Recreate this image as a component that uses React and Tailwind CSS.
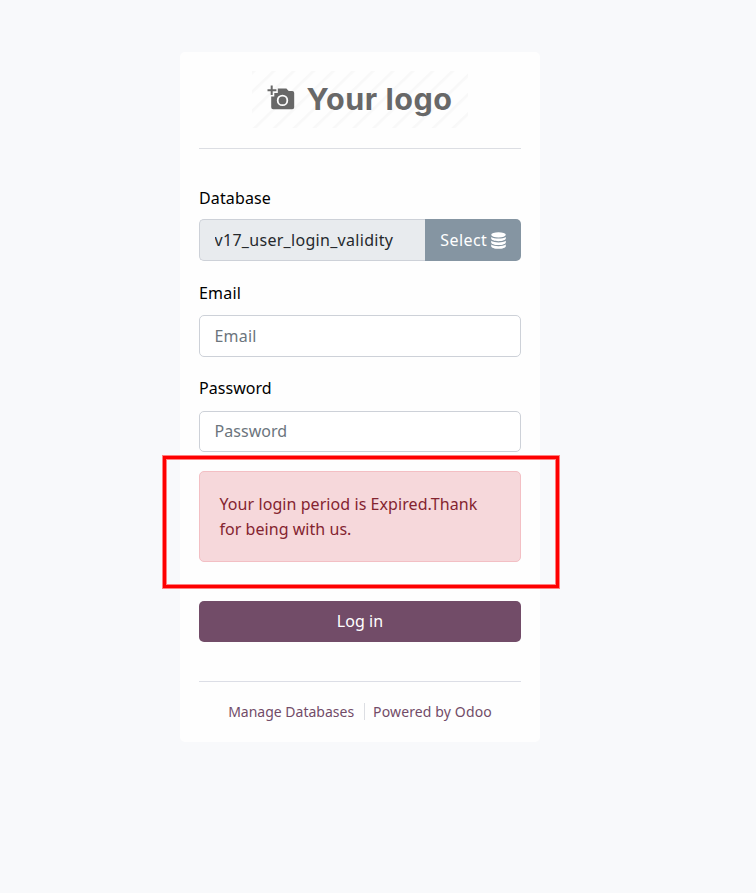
import React from "react";

function Logo() {
  return (
    <svg width="216" height="57" viewBox="0 0 216 57" className="mx-auto block" role="img" aria-label="Your logo">
      <defs>
        <pattern id="stripes" width="13.8" height="13.8" patternUnits="userSpaceOnUse" patternTransform="rotate(46)">
          <rect width="2.600" height="13.8" fill="#f8f8f8" />
        </pattern>
      </defs>
      <rect width="216" height="57" fill="url(#stripes)" />
      <g fill="#686868">
        <path d="M18.700 14.600h2v3.700h3.700v2h-3.700v3.700h-2v-3.700h-3.200v-2h3.200z" />
        <path
          fillRule="evenodd"
          d="M25.800 17.400h8.600l2.300 2.600h3.500a2 2 0 0 1 2 2v14.300a2 2 0 0 1-2 2H21.200a2 2 0 0 1-2-2V25.500h3.100v-3.600h3.500zM30.500 23.700a5.700 5.700 0 1 0 0 11.400a5.700 5.700 0 1 0 0-11.400z"
        />
        <circle cx="30.500" cy="29.400" r="3.900" />
        <text x="54.500" y="38.800" textLength="145.500" fontSize="30.500" fontWeight="700" className="font-['Inter',sans-serif]">
          Your logo
        </text>
      </g>
    </svg>
  );
}

function DatabaseIcon() {
  return (
    <svg width="15" height="17" viewBox="0 0 15 17" fill="currentColor" className="ml-[3.500px]">
      <ellipse cx="7.500" cy="2.800" rx="7.300" ry="2.600" />
      <path d="M.2 4.900c1.600 1.300 4.300 1.700 7.300 1.700s5.700-.4 7.300-1.700v1.700c0 1.500-3.300 2.600-7.300 2.600S.2 8.100.2 6.600z" />
      <path d="M.2 8.700c1.600 1.300 4.300 1.700 7.300 1.700s5.700-.4 7.300-1.700v1.700c0 1.500-3.300 2.600-7.300 2.600S.2 11.900.2 10.400z" />
      <path d="M.2 12.500c1.600 1.300 4.300 1.700 7.300 1.700s5.700-.4 7.300-1.700v1.700c0 1.500-3.300 2.600-7.300 2.600S.2 15.700.2 14.200z" />
    </svg>
  );
}

export default function App() {
  return (
    <div className="h-[893px] w-[756px] bg-[#f8f9fb] pl-[180px] pt-[52px] font-['Noto_Sans','Open_Sans',sans-serif] text-[16px] leading-[25px] text-black">
      <main className="relative h-[690px] w-[360px] rounded-[5px] bg-[#fefefe] px-[19px] pt-[19px]">
        <div className="h-[78px] border-b border-[#dcdee3]">
          <Logo />
        </div>

        <form onSubmit={(e) => e.preventDefault()}>
          <label htmlFor="db" className="mt-[37px] block h-[33px]">
            <span className="tracking-[0.13px]">Database</span>
          </label>
          <div className="flex h-[42px]">
            <input
              id="db"
              readOnly
              defaultValue="v17_user_login_validity"
              className="w-[226px] rounded-l-[5px] border border-r-0 border-[#cdd1d8] bg-[#e8ebee] px-[14.5px] tracking-[0.3px] text-[#25292d] outline-none"
            />
            <button type="button" className="flex w-[96px] items-center justify-center rounded-r-[5px] bg-[#8595a2] text-white">
              <span className="tracking-[0.4px]">Select</span>
              <DatabaseIcon />
            </button>
          </div>

          <label htmlFor="email" className="mt-[20px] block h-[34px]">
            <span className="tracking-[0.2px]">Email</span>
          </label>
          <input
            id="email"
            placeholder="Email"
            className="block h-[42px] w-full rounded-[5px] border border-[#cdd1d8] bg-white px-[14.5px] tracking-[0.2px] outline-none placeholder:text-[#6c757d]"
          />

          <label htmlFor="password" className="mt-[19px] block h-[35px]">
            <span className="tracking-[0.04px]">Password</span>
          </label>
          <input
            id="password"
            type="password"
            placeholder="Password"
            className="block h-[41px] w-full rounded-[5px] border border-[#cdd1d8] bg-white px-[14.5px] pb-[2px] tracking-[0.04px] outline-none placeholder:text-[#6c757d]"
          />

          <p role="alert" className="mt-[19px] h-[91px] rounded-[5px] border border-[#f3bfc4] bg-[#f6d8db] pl-[19.5px] pt-[20px] text-[#842430]">
            <span className="block tracking-[0.07px]">Your login period is Expired.Thank</span>
            <span className="block tracking-[0.04px]">for being with us.</span>
          </p>

          <button type="submit" className="mt-[39px] block h-[41px] w-full rounded-[5px] bg-[#724c68] pb-px tracking-[0.05px] text-white">
            Log in
          </button>
        </form>

        <footer className="mt-[39px] flex justify-center border-t border-[#dcdee6] pt-[21px] text-[14px] leading-[17px] text-[#724c68]">
          <a href="#" className="border-r border-[#dcdee3] pr-[10px]">Manage Databases</a>
          <a href="#" className="pl-[8px] tracking-[0.13px]">Powered by Odoo</a>
        </footer>

        <div className="pointer-events-none absolute left-[-18px] top-[403px] h-[134px] w-[398px] border border-[#ff8080]">
          <div className="h-full w-full border-[3px] border-[#fe0000]">
            <div className="h-full w-full border border-[#ff8080]" />
          </div>
        </div>
      </main>
    </div>
  );
}
